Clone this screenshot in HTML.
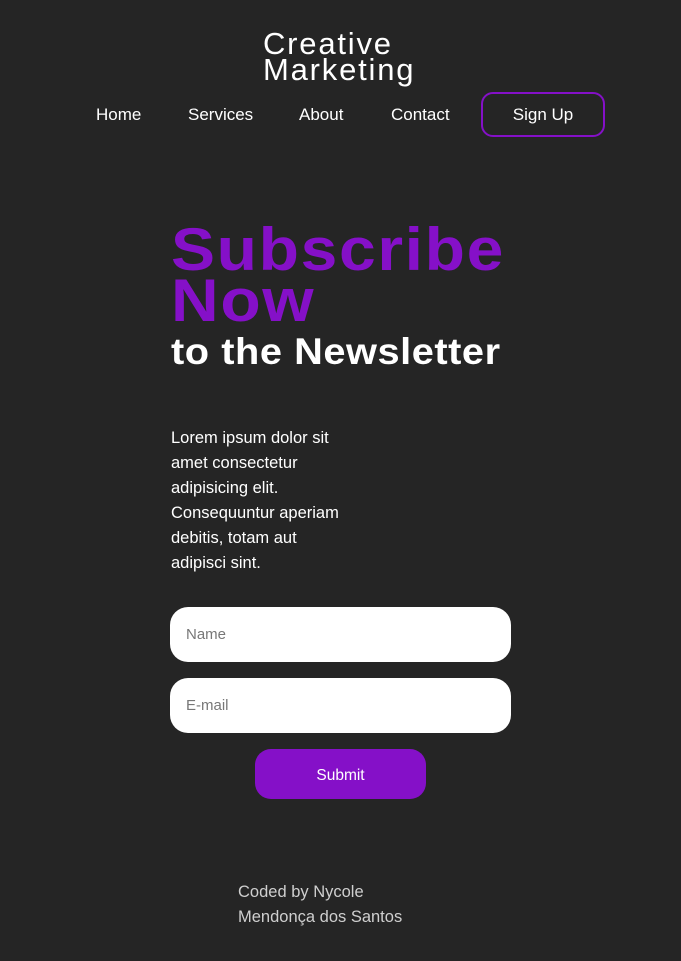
<!DOCTYPE html>
<html><head><meta charset="utf-8"><style>
*{margin:0;padding:0;box-sizing:border-box}
html,body{width:681px;height:961px;background:#252525;overflow:hidden;font-family:"Liberation Sans",sans-serif;color:#fff}
.a{position:absolute;white-space:nowrap}
.logo{left:263px;top:31px;font-size:31px;line-height:26px;font-weight:400;letter-spacing:1.8px}
.nav{top:105px;font-size:17px;line-height:20px}
.signup{left:481px;top:92px;width:124px;height:45px;border:2px solid #8510c8;border-radius:12px;font-size:17px;text-align:center;line-height:42px}
.h1{left:171px;top:224px;font-size:60px;font-weight:700;color:#8510c8;line-height:51px;letter-spacing:1.5px;transform:scaleX(1.1);transform-origin:left}
.h2{left:171px;top:332px;font-size:37px;font-weight:700;line-height:40px;letter-spacing:0.5px;transform:scaleX(1.075);transform-origin:left}
.p{left:171px;top:426px;font-size:16.5px;line-height:25px}
.in{left:170px;width:341px;height:55px;background:#fff;border-radius:18px;color:#777;font-size:15px;line-height:56px;padding-left:16px}
.btn{left:255px;top:749px;width:171px;height:50px;background:#8510c8;border-radius:16px;text-align:center;line-height:54px;font-size:15.5px}
.foot{left:238px;top:880px;font-size:16.5px;line-height:25px;color:#cfcfcf;font-weight:300}
</style></head><body>
<div class="a logo">Creative<br>Marketing</div>
<div class="a nav" style="left:96px">Home</div>
<div class="a nav" style="left:188px">Services</div>
<div class="a nav" style="left:299px">About</div>
<div class="a nav" style="left:391px">Contact</div>
<div class="a signup">Sign Up</div>
<div class="a h1">Subscribe<br>Now</div>
<div class="a h2">to the Newsletter</div>
<div class="a p">Lorem ipsum dolor sit<br>amet consectetur<br>adipisicing elit.<br>Consequuntur aperiam<br>debitis, totam aut<br>adipisci sint.</div>
<div class="a in" style="top:607px">Name</div>
<div class="a in" style="top:678px">E-mail</div>
<div class="a btn">Submit</div>
<div class="a foot">Coded by Nycole<br>Mendonça dos Santos</div>
</body></html>
